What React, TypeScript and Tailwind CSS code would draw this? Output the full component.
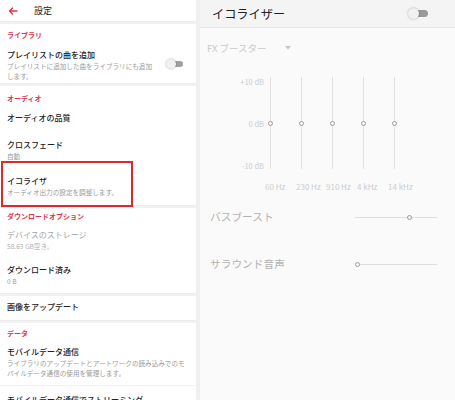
import React from "react";

const F = { fontFamily: '"Noto Sans CJK JP", "Noto Sans", sans-serif' };

function Toggle({ size = "sm" }: { size?: "sm" | "lg" }) {
  if (size === "lg") {
    return (
      <div className="relative w-[21px] h-[11px]">
        <div className="absolute left-[6px] top-[2px] w-[14px] h-[7px] rounded-full bg-[#9a9a9a]" />
        <div className="absolute left-0 top-0 w-[11px] h-[11px] rounded-full bg-[#f1f1f1] shadow-[0_0_2px_rgba(0,0,0,0.35)]" />
      </div>
    );
  }
  return (
    <div className="relative w-[17px] h-[10px]">
      <div className="absolute left-[5px] top-[2px] w-[12px] h-[6px] rounded-full bg-[#a0a0a0]" />
      <div className="absolute left-0 top-0 w-[10px] h-[10px] rounded-full bg-[#f1f1f1] shadow-[0_0_2px_rgba(0,0,0,0.35)]" />
    </div>
  );
}

function Divider() {
  return <div className="h-[3px] bg-[#f1f1f1] border-t border-[#ececec]" />;
}

function SectionHead({ children, pt }: { children: React.ReactNode; pt: string }) {
  return (
    <div className={`${pt} pl-[7px] text-[7px] leading-[12px] font-bold text-[#e3324c]`}>{children}</div>
  );
}

function Knob() {
  return <div className="w-[5px] h-[5px] rounded-full border border-[#9c9c9c] bg-[#fafafa]" />;
}

export default function App() {
  const bands = ["60 Hz", "230 Hz", "910 Hz", "4 kHz", "14 kHz"];
  return (
    <div style={F} className="w-[455px] h-[400px] overflow-hidden flex bg-[#f0f0f0]">
      {/* Left settings panel */}
      <div className="w-[196px] h-full bg-white relative overflow-hidden">
        <div className="h-[21px] flex items-center">
          <svg width="10" height="8" viewBox="0 0 10 8" className="ml-[8px]">
            <path d="M9 4H1.5M4.5 1L1.5 4L4.5 7" stroke="#e3324c" strokeWidth="1.3" fill="none" strokeLinecap="round" strokeLinejoin="round" />
          </svg>
          <span className="ml-[16px] text-[9px] leading-[12px] text-[#222]">設定</span>
        </div>
        <Divider />
        {/* Library */}
        <SectionHead pt="pt-[5px]">ライブラリ</SectionHead>
        <div className="flex items-start pl-[7px] pr-[13px] pt-[8px] pb-[2px]">
          <div className="flex-1">
            <div className="text-[8px] leading-[12px] font-medium text-[#222]">プレイリストの曲を追加</div>
            <div className="text-[6.6px] leading-[10px] text-[#9a9a9a] w-[150px]">プレイリストに追加した曲をライブラリにも追加します。</div>
          </div>
          <div className="mt-[10px]">
            <Toggle />
          </div>
        </div>
        <Divider />
        {/* Audio */}
        <SectionHead pt="pt-[6px]">オーディオ</SectionHead>
        <div className="pl-[7px] pt-[8px] text-[8px] leading-[12px] font-medium text-[#222]">オーディオの品質</div>
        <div className="pl-[7px] pt-[15px] text-[8px] leading-[12px] font-medium text-[#222]">クロスフェード</div>
        <div className="pl-[7px] text-[6.6px] leading-[10px] text-[#9a9a9a]">自動</div>
        <div className="pl-[7px] pt-[14px] text-[8px] leading-[12px] font-medium text-[#222]">イコライザ</div>
        <div className="pl-[7px] text-[6.6px] leading-[10px] text-[#9a9a9a]">オーディオ出力の設定を調整します。</div>
        <div className="h-[8px]" />
        <Divider />
        {/* Download */}
        <SectionHead pt="pt-[2px]">ダウンロードオプション</SectionHead>
        <div className="pl-[7px] pt-[7px] text-[8px] leading-[12px] text-[#a3a3a3]">デバイスのストレージ</div>
        <div className="pl-[7px] text-[6.6px] leading-[10px] text-[#b0b0b0]">58.63 GB空き。</div>
        <div className="pl-[7px] pt-[13px] text-[8px] leading-[12px] font-medium text-[#222]">ダウンロード済み</div>
        <div className="pl-[7px] text-[6.6px] leading-[10px] text-[#9a9a9a]">0 B</div>
        <div className="h-[7px]" />
        <Divider />
        <div className="pl-[7px] pt-[5px] text-[8px] leading-[12px] font-medium text-[#222]">画像をアップデート</div>
        <div className="h-[7px]" />
        <Divider />
        {/* Data */}
        <SectionHead pt="pt-[4px]">データ</SectionHead>
        <div className="pl-[7px] pt-[7px] text-[8px] leading-[12px] font-medium text-[#222]">モバイルデータ通信</div>
        <div className="pl-[7px] text-[6.6px] leading-[10px] text-[#9a9a9a] w-[186px]">ライブラリのアップデートとアートワークの読み込みでのモバイルデータ通信の使用を管理します。</div>
        <div className="h-[8px] border-b border-[#f3f3f3]" />
        <div className="pl-[7px] pt-[8px] text-[8px] leading-[12px] font-medium text-[#222] whitespace-nowrap">モバイルデータ通信でストリーミング</div>

        {/* annotation box */}
        <div className="absolute left-[1px] top-[161px] w-[132px] h-[46px] border-2 border-[#e0262e]" />
      </div>

      {/* gap */}
      <div className="w-[4px] h-full bg-[#efefef]" />

      {/* Right equalizer panel */}
      <div className="flex-1 h-full bg-[#fafafa]">
        <div className="h-[28px] bg-[#f4f4f4] border-b border-[#e6e6e6] flex items-center pl-[12px] pr-[26px]">
          <span className="text-[12.2px] leading-[16px] text-[#222]">イコライザー</span>
          <div className="ml-auto">
            <Toggle size="lg" />
          </div>
        </div>
        <div className="flex items-center mt-[14px] pl-[7px]">
          <span className="text-[9.5px] leading-[12px] text-[#c9c9c9]">FX ブースター</span>
          <svg width="6" height="4" viewBox="0 0 6 4" className="ml-[18px]">
            <path d="M0 0H6L3 3.5Z" fill="#c4c4c4" />
          </svg>
        </div>
        {/* EQ */}
        <div className="flex mt-[23px] h-[94px]">
          <div className="w-[64px] flex flex-col justify-between items-end text-[7.5px] leading-[10px] text-[#cdcdcd]">
            <span>+10 dB</span>
            <span>0 dB</span>
            <span>-10 dB</span>
          </div>
          <div className="flex gap-[19px] h-[92px]">
            {bands.map((b) => (
              <div key={b} className="w-[12px] h-full flex justify-center relative">
                <div className="w-px h-full bg-[#e2e2e2]" />
                <div className="absolute left-[3.5px] top-[44px]">
                  <Knob />
                </div>
              </div>
            ))}
          </div>
        </div>
        <div className="flex mt-[10px] text-[8px] leading-[12px] text-[#cdcdcd] whitespace-nowrap">
          <span className="ml-[65px] w-[24px]">60 Hz</span>
          <span className="ml-[7px] w-[28px]">230 Hz</span>
          <span className="ml-[2px] w-[28px]">910 Hz</span>
          <span className="ml-[3px] w-[23px]">4 kHz</span>
          <span className="ml-[8px] w-[27px]">14 kHz</span>
        </div>
        {/* Bass boost */}
        <div className="flex items-center mt-[12px] h-[24px] pl-[10px]">
          <span className="text-[10.7px] leading-[14px] text-[#b3b3b3]">バスブースト</span>
          <div className="ml-auto mr-[18px] w-[82px] h-[5px] relative flex items-center">
            <div className="w-full h-px bg-[#dedede]" />
            <div className="absolute left-[52px] top-0">
              <Knob />
            </div>
          </div>
        </div>
        {/* Surround */}
        <div className="flex items-center mt-[23px] h-[24px] pl-[10px]">
          <span className="text-[10.7px] leading-[14px] text-[#b3b3b3]">サラウンド音声</span>
          <div className="ml-auto mr-[18px] w-[82px] h-[5px] relative flex items-center">
            <div className="w-full h-px bg-[#dedede]" />
            <div className="absolute left-0 top-0">
              <Knob />
            </div>
          </div>
        </div>
      </div>
    </div>
  );
}
